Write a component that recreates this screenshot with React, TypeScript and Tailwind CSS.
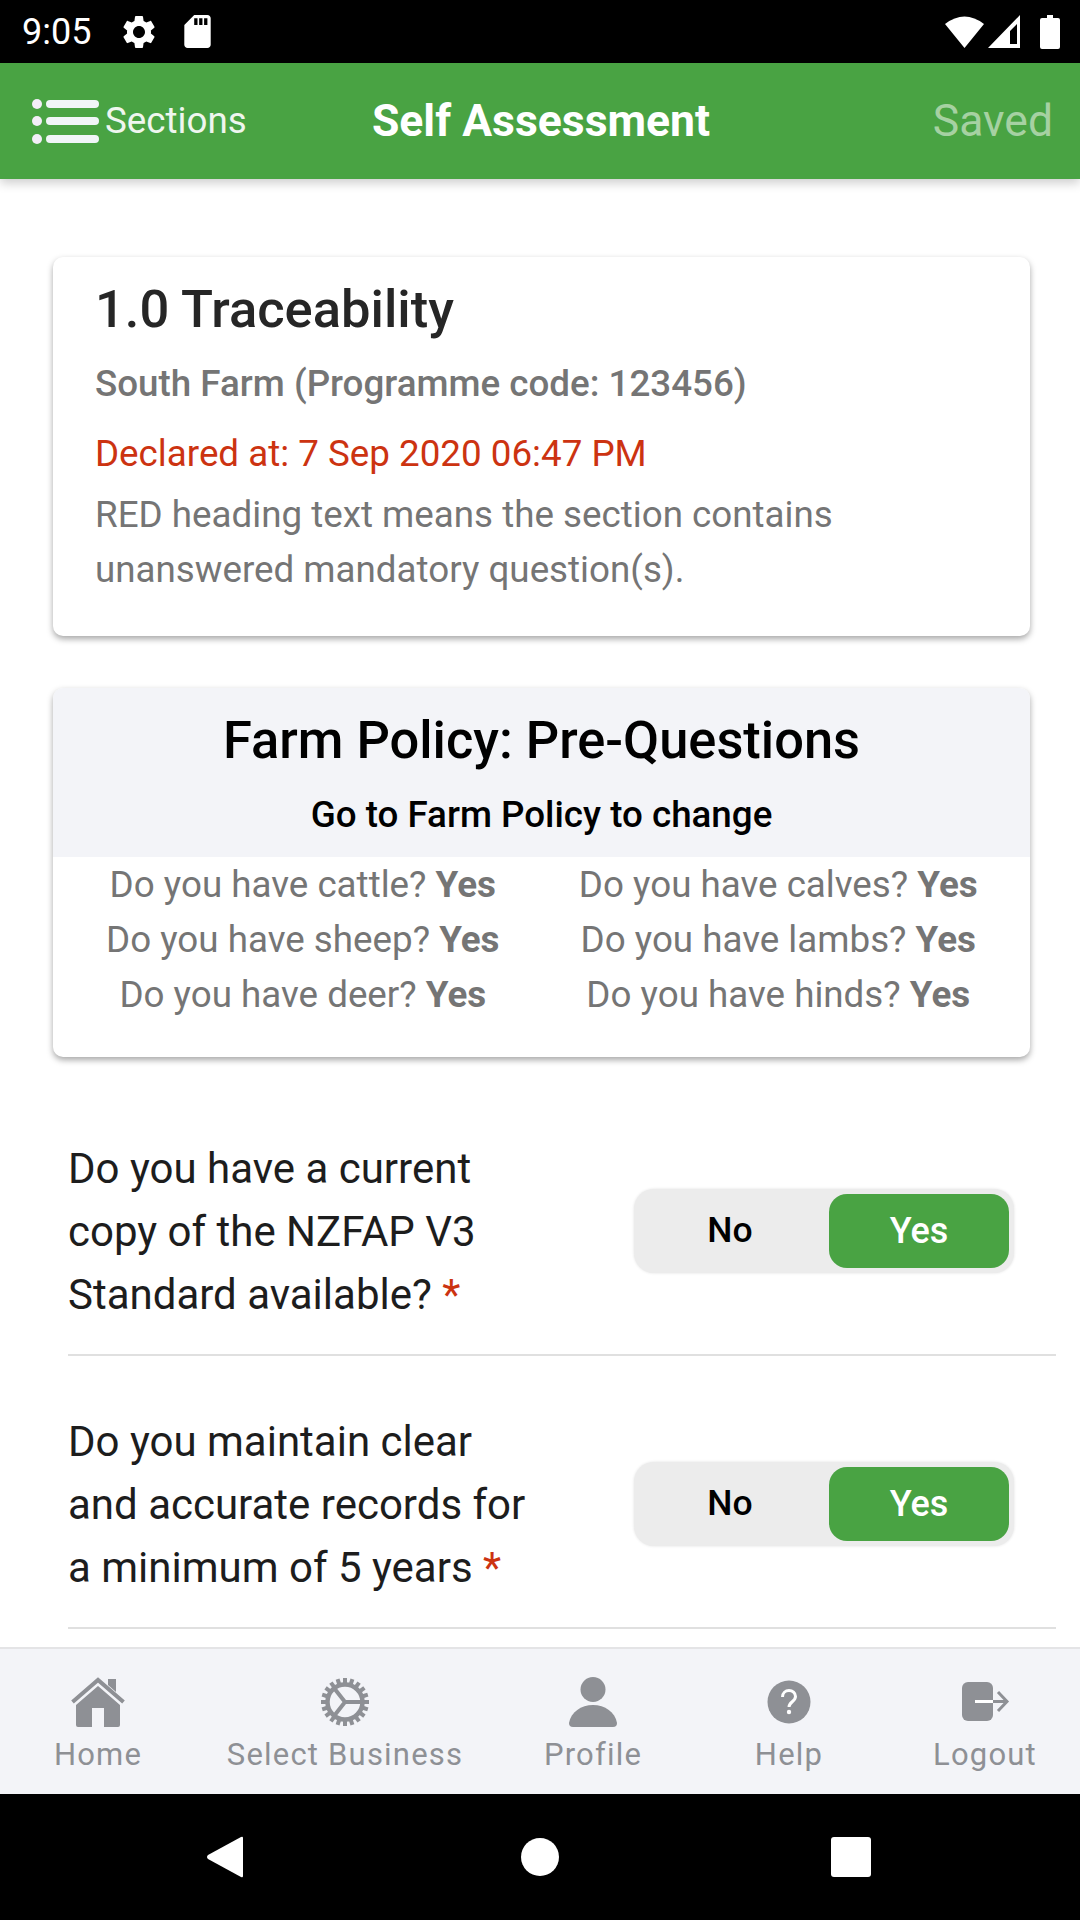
import React from "react";

const StatusBar = () => (
  <div className="flex h-[63px] items-center bg-black pl-[22px] text-white">
    <span className="w-[97px] text-[36px] leading-none">9:05</span>
    <svg viewBox="0 0 24 24" className="h-[40px] w-[40px] fill-white">
      <path d="M19.14 12.94c.04-.3.06-.61.06-.94 0-.32-.02-.64-.07-.94l2.03-1.58c.18-.14.23-.41.12-.61l-1.92-3.32c-.12-.22-.37-.29-.59-.22l-2.39.96c-.5-.38-1.03-.7-1.62-.94l-.36-2.54c-.04-.24-.24-.41-.48-.41h-3.84c-.24 0-.43.17-.47.41l-.36 2.54c-.59.24-1.13.57-1.62.94l-2.39-.96c-.22-.08-.47 0-.59.22L2.74 8.87c-.12.21-.08.47.12.61l2.03 1.58c-.05.3-.09.63-.09.94s.02.64.07.94l-2.03 1.58c-.18.14-.23.41-.12.61l1.92 3.32c.12.22.37.29.59.22l2.39-.96c.5.38 1.03.7 1.62.94l.36 2.54c.05.24.24.41.48.41h3.84c.24 0 .44-.17.47-.41l.36-2.54c.59-.24 1.13-.56 1.62-.94l2.39.96c.22.08.47 0 .59-.22l1.92-3.32c.12-.22.07-.47-.12-.61l-2.01-1.58zM12 15.6c-1.98 0-3.6-1.62-3.6-3.6s1.62-3.6 3.6-3.6 3.6 1.62 3.6 3.6-1.62 3.6-3.6 3.6z" />
    </svg>
    <svg viewBox="4 2 16 20" className="ml-[25px] h-[33px] w-[27px] fill-white">
      <path d="M18 2h-8L4.02 8 4 20c0 1.1.9 2 2 2h12c1.1 0 2-.9 2-2V4c0-1.1-.9-2-2-2zm-6 6h-2V4h2v4zm3 0h-2V4h2v4zm3 0h-2V4h2v4z" />
    </svg>
    <div className="ml-auto flex items-center pr-[20px]">
      <svg viewBox="0 0 39 33" className="h-[33px] w-[39px] fill-white">
        <path d="M0 9Q19.5 -6 39 9L19.5 33Z" />
      </svg>
      <svg viewBox="0 0 32 33" className="ml-[4px] h-[33px] w-[32px] fill-white">
        <path fillRule="evenodd" d="M0 33L32 0V33ZM22 16L29 9V29H22Z" />
      </svg>
      <svg viewBox="0 0 20 34" className="ml-[20px] h-[34px] w-[20px] fill-white">
        <path d="M7 0h6v3h5a2 2 0 0 1 2 2v27a2 2 0 0 1-2 2H2a2 2 0 0 1-2-2V5a2 2 0 0 1 2-2h5z" />
      </svg>
    </div>
  </div>
);

const TopBar = () => (
  <div className="relative z-10 flex h-[116px] items-center bg-[#49a343] pl-[32px] pr-[27px] shadow-[0_4px_10px_rgba(0,0,0,0.2)]">
    <div className="flex flex-1 items-center">
      <svg viewBox="0 0 67 48" className="h-[48px] w-[67px]">
        <circle cx="5" cy="7" r="5" fill="#f3eef8" />
        <circle cx="5" cy="24" r="5" fill="#f3eef8" />
        <circle cx="5" cy="42" r="5" fill="#f3eef8" />
        <rect x="14" y="3" width="53" height="8" rx="4" fill="#f0f5f7" />
        <rect x="14" y="20" width="53" height="8" rx="4" fill="#f0f5f7" />
        <rect x="14" y="38" width="53" height="8" rx="4" fill="#f0f5f7" />
      </svg>
      <span className="ml-[6px] text-[36.75px] text-[#eff6ef]">Sections</span>
    </div>
    <span className="mr-[3px] text-[44.5px] font-bold text-white">Self Assessment</span>
    <div className="flex-1 text-right text-[44.5px] text-[#a6d1a2]">Saved</div>
  </div>
);

const Answer = ({ q }: { q: string }) => (
  <div className="leading-[55px]">
    {q} <span className="font-bold">Yes</span>
  </div>
);

const Question = ({ first, children }: { first?: boolean; children: React.ReactNode }) => (
  <div className={first ? "ml-[68px] mt-[80px] flex w-[988px] items-center justify-between border-b-2 border-[#e0e0e0] pb-[28px] pr-[42px]" : "ml-[68px] mt-[54px] flex w-[988px] items-center justify-between border-b-2 border-[#e0e0e0] pb-[28px] pr-[42px]"}>
    <div className="w-[470px] text-[42px] leading-[63px] text-[#1d1d1d]">
      {children} <span className="text-[#cc3311]">*</span>
    </div>
    <div className="mb-[2px] flex h-[84px] w-[380px] items-center rounded-[20px] bg-[#ececec] p-[5px] shadow-[0_0_3px_rgba(0,0,0,0.12)]">
      <div className="flex-1 pr-[8px] text-center text-[35.5px] font-medium text-black">No</div>
      <div className="flex h-[74px] w-[180px] items-center justify-center rounded-[18px] bg-[#49a343] text-[36px] font-medium text-white">Yes</div>
    </div>
  </div>
);

const Gear = () => {
  const teeth = Array.from({ length: 20 }, (_, i) => i * 18);
  return (
    <svg viewBox="0 0 50 50" className="h-[50px] w-[50px]">
      {teeth.map((a) => (
        <rect key={a} x="23" y="1" width="4" height="7" fill="#8e9095" transform={`rotate(${a} 25 25)`} />
      ))}
      <circle cx="25" cy="25" r="17.5" fill="none" stroke="#8e9095" strokeWidth="4.5" />
      <path d="M25 25H42M25 25L14 11M25 25L14 39" fill="none" stroke="#8e9095" strokeWidth="4" />
    </svg>
  );
};

const HomeIcon = () => (
  <svg viewBox="0 0 54 50" className="h-[50px] w-[54px]">
    <path d="M1.5 25L27 3L52.5 25" fill="none" stroke="#8e9095" strokeWidth="4" />
    <path d="M37 2h8v13l-8-7z" fill="#8e9095" />
    <path fillRule="evenodd" d="M5 28L27 9L49 28V48a2 2 0 0 1-2 2H33V31H21V50H7a2 2 0 0 1-2-2Z" fill="#8e9095" />
  </svg>
);

const ProfileIcon = () => (
  <svg viewBox="0 0 48 50" className="h-[50px] w-[48px]">
    <circle cx="24" cy="12.5" r="12.5" fill="#8e9095" />
    <path d="M0 46C2 35 12 28 24 28S46 35 48 46Q48 50 44 50H4Q0 50 0 46Z" fill="#8e9095" />
  </svg>
);

const HelpIcon = () => (
  <svg viewBox="0 0 50 50" className="h-[50px] w-[50px]">
    <circle cx="25" cy="25" r="21.5" fill="#8e9095" />
    <path d="M18.5 20c0-4 3-6.5 6.5-6.5s6.5 2.5 6.5 6c0 5-6.5 5.5-6.5 10.500" fill="none" stroke="#fff" strokeWidth="3" />
    <circle cx="25" cy="35" r="2.200" fill="#fff" />
  </svg>
);

const LogoutIcon = () => (
  <svg viewBox="0 0 50 50" className="h-[50px] w-[50px]">
    <rect x="2" y="5" width="31" height="39" rx="6" fill="#8e9095" />
    <path d="M15 24.500H33" stroke="#fff" strokeWidth="3" />
    <path d="M33 24.500H47M38 15L47 24.500L38 34" fill="none" stroke="#8e9095" strokeWidth="3" />
  </svg>
);

const NavItem = ({ width, label, children }: { width: string; label: string; children: React.ReactNode }) => (
  <div className={`flex flex-col items-center ${width}`}>
    {children}
    <span className="mt-[8px] whitespace-nowrap text-[31px] leading-[40px] tracking-[1.2px] text-[#8e9095]">{label}</span>
  </div>
);

const BottomNav = () => (
  <div className="flex h-[147px] border-t-2 border-[#e4e4e6] bg-[#f3f4f8] pt-[28px]">
    <NavItem width="w-[196px]" label="Home"><HomeIcon /></NavItem>
    <NavItem width="w-[298px]" label="Select Business"><Gear /></NavItem>
    <NavItem width="w-[198px]" label="Profile"><ProfileIcon /></NavItem>
    <NavItem width="w-[194px]" label="Help"><HelpIcon /></NavItem>
    <NavItem width="w-[194px] pl-[4px]" label="Logout"><LogoutIcon /></NavItem>
  </div>
);

const SystemNav = () => (
  <div className="flex h-[126px] items-center gap-[278px] bg-black pl-[207px]">
    <svg viewBox="0 0 36 42" className="h-[42px] w-[36px] fill-white">
      <path d="M36 2V40Q36 42 34 41L1 23Q-1 21 1 19L34 1Q36 0 36 2Z" />
    </svg>
    <div className="h-[38px] w-[38px] rounded-full bg-white" />
    <div className="ml-[-6px] h-[40px] w-[40px] rounded-[3px] bg-white" />
  </div>
);

export default function App() {
  return (
    <div className="flex h-[1920px] w-[1080px] flex-col overflow-hidden bg-white font-['Roboto',sans-serif]">
      <StatusBar />
      <TopBar />
      <div className="flex-1 overflow-hidden">
        <div className="ml-[53px] mt-[78px] h-[379px] w-[977px] rounded-[10px] bg-white pl-[42px] pt-[18px] shadow-[0_3px_6px_rgba(0,0,0,0.35)]">
          <div className="text-[52.5px] font-medium leading-[68px] text-[#262626]">1.0 Traceability</div>
          <div className="mt-[16px] text-[36.75px] font-medium leading-[50px] text-[#757575]">South Farm (Programme code: 123456)</div>
          <div className="mt-[20px] text-[36.75px] leading-[50px] text-[#cc3311]">Declared at: 7 Sep 2020 06:47 PM</div>
          <div className="mt-[8px] w-[860px] text-[36.75px] leading-[55px] text-[#757575]">RED heading text means the section contains unanswered mandatory question(s).</div>
        </div>

        <div className="ml-[53px] mt-[52px] h-[369px] w-[977px] overflow-hidden rounded-[10px] bg-white shadow-[0_3px_6px_rgba(0,0,0,0.35)]">
          <div className="flex h-[169px] flex-col items-center bg-[#f3f4f8] pt-[20px]">
            <div className="text-[52.4px] font-medium leading-[64px] text-black">Farm Policy: Pre-Questions</div>
            <div className="mt-[20px] text-[36.75px] font-medium leading-[46px] text-black">Go to Farm Policy to change</div>
          </div>
          <div className="grid grid-cols-2 pl-[12px] pr-[14px] text-center text-[36.75px] text-[#757575]">
            <Answer q="Do you have cattle?" />
            <Answer q="Do you have calves?" />
            <Answer q="Do you have sheep?" />
            <Answer q="Do you have lambs?" />
            <Answer q="Do you have deer?" />
            <Answer q="Do you have hinds?" />
          </div>
        </div>

        <Question first>Do you have a current copy of the NZFAP V3 Standard available?</Question>
        <Question>Do you maintain clear and accurate records for a minimum of 5 years</Question>
      </div>
      <BottomNav />
      <SystemNav />
    </div>
  );
}
